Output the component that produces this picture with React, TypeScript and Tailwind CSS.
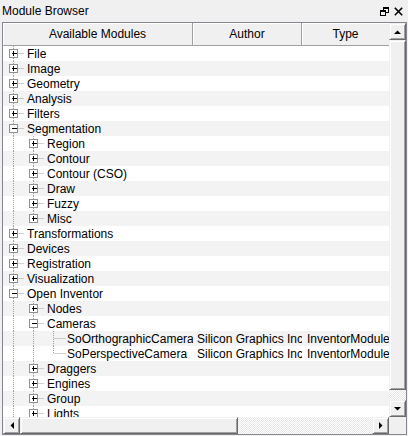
import type { ReactNode } from 'react';

type Kind = 'plus' | 'minus' | 'leaf';

interface Row {
  label: string;
  depth: number;
  kind: Kind;
  author?: string;
  type?: string;
}

const rows: Row[] = [
  { label: 'File', depth: 0, kind: 'plus' },
  { label: 'Image', depth: 0, kind: 'plus' },
  { label: 'Geometry', depth: 0, kind: 'plus' },
  { label: 'Analysis', depth: 0, kind: 'plus' },
  { label: 'Filters', depth: 0, kind: 'plus' },
  { label: 'Segmentation', depth: 0, kind: 'minus' },
  { label: 'Region', depth: 1, kind: 'plus' },
  { label: 'Contour', depth: 1, kind: 'plus' },
  { label: 'Contour (CSO)', depth: 1, kind: 'plus' },
  { label: 'Draw', depth: 1, kind: 'plus' },
  { label: 'Fuzzy', depth: 1, kind: 'plus' },
  { label: 'Misc', depth: 1, kind: 'plus' },
  { label: 'Transformations', depth: 0, kind: 'plus' },
  { label: 'Devices', depth: 0, kind: 'plus' },
  { label: 'Registration', depth: 0, kind: 'plus' },
  { label: 'Visualization', depth: 0, kind: 'plus' },
  { label: 'Open Inventor', depth: 0, kind: 'minus' },
  { label: 'Nodes', depth: 1, kind: 'plus' },
  { label: 'Cameras', depth: 1, kind: 'minus' },
  {
    label: 'SoOrthographicCamera',
    depth: 2,
    kind: 'leaf',
    author: 'Silicon Graphics Inc',
    type: 'InventorModule',
  },
  {
    label: 'SoPerspectiveCamera',
    depth: 2,
    kind: 'leaf',
    author: 'Silicon Graphics Inc',
    type: 'InventorModule',
  },
  { label: 'Draggers', depth: 1, kind: 'plus' },
  { label: 'Engines', depth: 1, kind: 'plus' },
  { label: 'Group', depth: 1, kind: 'plus' },
  { label: 'Lights', depth: 1, kind: 'plus' },
];

// does the branch at level k continue below row i? (list keeps going past the view)
function continues(i: number, k: number) {
  for (let j = i + 1; j < rows.length; j++) {
    if (rows[j].depth <= k) return rows[j].depth === k;
  }
  return true;
}

const LINE = '#a0a0a0';

function Guides({ index }: { index: number }) {
  const row = rows[index];
  const d = row.depth;
  const width = 24 + 20 * d;
  const parts: ReactNode[] = [];

  for (let k = 0; k < d; k++) {
    if (continues(index, k)) {
      const x = 10.5 + 20 * k;
      parts.push(<line key={`v${k}`} x1={x} y1={0} x2={x} y2={15} />);
    }
  }

  const x = 10.5 + 20 * d;
  const more = continues(index, d);
  if (row.kind === 'leaf') {
    parts.push(<line key="top" x1={x} y1={0} x2={x} y2={more ? 15 : 8} />);
    parts.push(<line key="h" x1={x + 1} y1={7.5} x2={x + 12} y2={7.5} />);
  } else {
    parts.push(<line key="top" x1={x} y1={0} x2={x} y2={3} />);
    if (more) parts.push(<line key="bot" x1={x} y1={12} x2={x} y2={15} />);
    parts.push(<line key="h" x1={x + 5} y1={7.5} x2={x + 11} y2={7.5} />);
  }

  return (
    <svg width={width} height={15} className="shrink-0">
      <g stroke={LINE} strokeWidth={1} strokeDasharray="1 1" fill="none">
        {parts}
      </g>
      {row.kind !== 'leaf' && (
        <g shapeRendering="crispEdges">
          <rect x={x - 4} y={3.5} width={8} height={8} fill="#fff" stroke="#919191" />
          <line x1={x - 2} y1={7.5} x2={x + 3} y2={7.5} stroke="#000" />
          {row.kind === 'plus' && (
            <line x1={x} y1={5} x2={x} y2={10} stroke="#000" />
          )}
        </g>
      )}
    </svg>
  );
}

function Arrow({ dir }: { dir: 'up' | 'down' | 'left' | 'right' }) {
  const pts = {
    up: '0,4 7,4 3.5,0.5',
    down: '0,0 7,0 3.5,3.5',
    left: '4,0 4,7 0.5,3.5',
    right: '0,0 0,7 3.5,3.5',
  }[dir];
  const vertical = dir === 'up' || dir === 'down';
  return (
    <svg width={vertical ? 7 : 4} height={vertical ? 4 : 7}>
      <polygon points={pts} fill="#000" />
    </svg>
  );
}

const raised =
  'bg-[#f0f0f0] border border-t-[#f0f0f0] border-l-[#f0f0f0] border-r-[#696969] border-b-[#696969] shadow-[inset_1px_1px_#fff,inset_-1px_-1px_#a0a0a0]';
const track =
  'bg-[repeating-conic-gradient(#ffffff_0_25%,#e6e6e6_0_50%)] bg-[length:2px_2px]';

function ScrollButton({ dir }: { dir: 'up' | 'down' | 'left' | 'right' }) {
  return (
    <div className={`flex h-[17px] w-[17px] shrink-0 items-center justify-center ${raised}`}>
      <Arrow dir={dir} />
    </div>
  );
}

export default function App() {
  return (
    <div
      className="flex h-[436px] w-[408px] flex-col overflow-hidden bg-[#f0f0f0] text-[12px] leading-none text-black"
      style={{ fontFamily: '"Liberation Sans", Arial, sans-serif' }}
    >
      {/* title bar */}
      <div className="flex h-[22px] shrink-0 items-center justify-between pl-[2px] pr-[5px]">
        <span>Module Browser</span>
        <div className="flex items-center gap-[5px]">
          <svg width="9" height="9" viewBox="0 0 9 9" shapeRendering="crispEdges">
            <rect x="3.5" y="0.5" width="5" height="5" fill="none" stroke="#000" />
            <rect x="3" y="0" width="6" height="2" fill="#000" />
            <rect x="0.5" y="3.5" width="5" height="5" fill="#f0f0f0" stroke="#000" />
            <rect x="0" y="3" width="6" height="2" fill="#000" />
          </svg>
          <svg width="9" height="9" viewBox="0 0 9 9">
            <path d="M0.8 0.8 L8.2 8.2 M8.2 0.8 L0.8 8.2" stroke="#000" strokeWidth="1.6" />
          </svg>
        </div>
      </div>

      {/* frame */}
      <div className="flex min-h-0 flex-1 flex-col pb-[1px] pl-[2px] pr-[1px]">
        <div className="flex min-h-0 flex-1 flex-col border border-[#828790] bg-white">
          <div className="flex min-h-0 flex-1">
            <div className="flex min-w-0 flex-1 flex-col overflow-hidden">
              {/* header */}
              <div className="flex h-[23px] shrink-0 border-b border-[#a0a0a0] bg-[#f0f0f0]">
                <div className="flex w-[190px] shrink-0 items-center justify-center border-r border-[#a0a0a0] shadow-[inset_1px_1px_#fff]">
                  Available Modules
                </div>
                <div className="flex w-[109px] shrink-0 items-center justify-center border-r border-[#a0a0a0] shadow-[inset_1px_1px_#fff]">
                  Author
                </div>
                <div className="flex flex-1 items-center justify-center shadow-[inset_1px_1px_#fff]">
                  Type
                </div>
              </div>

              {/* rows */}
              <div className="min-h-0 flex-1 overflow-hidden">
                {rows.map((row, i) => (
                  <div
                    key={row.label}
                    className={`flex h-[15px] items-center whitespace-nowrap ${
                      i % 2 === 1 ? 'bg-[#f3f3f3]' : 'bg-white'
                    }`}
                  >
                    <div className="flex w-[190px] shrink-0 items-center overflow-hidden">
                      <Guides index={i} />
                      <span>{row.label}</span>
                    </div>
                    <div className="w-[109px] shrink-0 overflow-hidden pl-[4px]">
                      {row.author}
                    </div>
                    <div className="min-w-0 flex-1 overflow-hidden pl-[5px]">{row.type}</div>
                  </div>
                ))}
              </div>
            </div>

            {/* vertical scrollbar */}
            <div className="flex w-[17px] shrink-0 flex-col">
              <ScrollButton dir="up" />
              <div className={`h-[350px] shrink-0 ${raised}`} />
              <div className={`flex-1 ${track}`} />
              <ScrollButton dir="down" />
            </div>
          </div>

          {/* horizontal scrollbar */}
          <div className="flex h-[17px] shrink-0">
            <ScrollButton dir="left" />
            <div className={`w-[218px] shrink-0 ${raised}`} />
            <div className={`flex-1 ${track}`} />
            <ScrollButton dir="right" />
            <div className="w-[17px] shrink-0 bg-[#f0f0f0]" />
          </div>
        </div>
      </div>
    </div>
  );
}
